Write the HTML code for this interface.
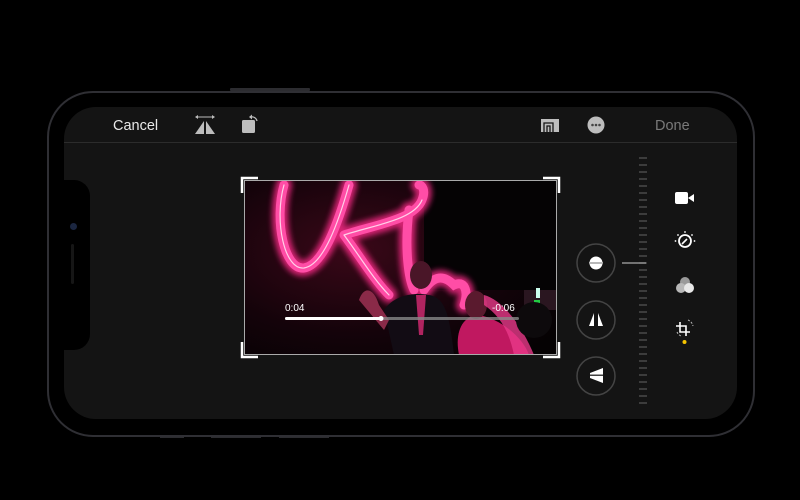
<!DOCTYPE html>
<html><head><style>
body{margin:0;width:800px;height:500px;background:#000;overflow:hidden;position:relative;font-family:"Liberation Sans",sans-serif}
.abs{position:absolute}
</style></head><body>
<div class="abs" style="left:230px;top:88px;width:80px;height:3px;background:#2c2c30;border-radius:1px"></div>
<div class="abs" style="left:160px;top:435px;width:24px;height:3px;background:#2c2c30"></div>
<div class="abs" style="left:211px;top:435px;width:50px;height:3px;background:#2c2c30"></div>
<div class="abs" style="left:279px;top:435px;width:50px;height:3px;background:#2c2c30"></div>
<div class="abs" style="left:47px;top:91px;width:704px;height:342px;border:2px solid #2f2f34;border-radius:46px;background:#000"></div>
<div class="abs" style="left:64px;top:107px;width:673px;height:312px;background:#141414;border-radius:32px"></div>
<div class="abs" style="left:62px;top:180px;width:28px;height:170px;background:#000;border-radius:0 16px 16px 0"></div>
<div class="abs" style="left:70px;top:223px;width:7px;height:7px;border-radius:50%;background:#1b2640"></div>
<div class="abs" style="left:71px;top:244px;width:3px;height:40px;border-radius:2px;background:#161616"></div>
<div class="abs" style="left:64px;top:142px;width:673px;height:1px;background:#2c2c2c"></div>
<div class="abs" style="left:113px;top:117.5px;color:#e8e8e8;font-size:14.5px">Cancel</div>
<div class="abs" style="left:655px;top:117.5px;color:#7a7a7a;font-size:14.5px">Done</div>
<svg class="abs" style="left:0;top:0" width="800" height="500">
 <g fill="#bdbdbd" stroke="#bdbdbd">
  <line x1="197" y1="117" x2="213" y2="117" stroke-width="1"/>
  <path d="M195 117l3-2v4z M215 117l-3-2v4z" stroke="none"/>
  <path d="M204 121v13h-9z M206 121v13h9z" stroke="none"/>
  <rect x="242" y="120" width="13" height="13" rx="1.5" stroke="none"/>
  <path d="M251 117a5 5 0 0 1 6 4" fill="none" stroke-width="1.2"/>
  <path d="M249 117l3-2.5v5z" stroke="none"/>
  <path d="M541 119h18v13h-18z" stroke="none"/>
  <path d="M544 132v-9h9v9 M547 132v-6h3v6" stroke="#141414" stroke-width="1.3" fill="none"/>
  <circle cx="596" cy="125" r="8.5" stroke="none"/>
 </g>
 <g fill="#444"><circle cx="592.5" cy="125" r="1.3"/><circle cx="596" cy="125" r="1.3"/><circle cx="599.5" cy="125" r="1.3"/></g>
 <g stroke="#555" stroke-width="1.2">
  <path d="M639 158h8M639 165h8M639 172h8M639 179h8M639 186h8M639 193h8M639 200h8M639 207h8M639 214h8M639 221h8M639 228h8M639 235h8M639 242h8M639 249h8M639 256h8M639 263h8M639 270h8M639 277h8M639 284h8M639 291h8M639 298h8M639 305h8M639 312h8M639 319h8M639 326h8M639 333h8M639 340h8M639 347h8M639 354h8M639 361h8M639 368h8M639 375h8M639 382h8M639 389h8M639 396h8M639 403h8"/>
 </g>
 <line x1="622" y1="263" x2="646" y2="263" stroke="#aaa" stroke-width="1.2"/>
 <g fill="none" stroke="#444" stroke-width="1.5">
  <circle cx="596" cy="263" r="19"/><circle cx="596" cy="320" r="19"/><circle cx="596" cy="376" r="19"/>
 </g>
 <g fill="#fff">
  <circle cx="596" cy="263" r="6.5"/>
  <rect x="587" y="262" width="18" height="1.8" fill="#141414"/>
  <rect x="589" y="262.3" width="14" height="1.2"/>
  <path d="M594 313l-5 13h5z M598 313l5 13h-5z"/>
  <path d="M603 368l-13 5v5l13 5z"/>
  <rect x="588" y="374.6" width="16" height="1.2" fill="#141414"/>
 </g>
 <g fill="#fff">
  <rect x="675" y="192" width="13" height="12" rx="2"/>
  <path d="M688 198l6-4v8z"/>
  <circle cx="685" cy="241" r="6" fill="none" stroke="#fff" stroke-width="1.8"/>
  <line x1="682" y1="244" x2="687" y2="239" stroke="#fff" stroke-width="1.6"/>
  <g><circle cx="685" cy="232" r="0.9"/><circle cx="678" cy="235" r="0.9"/><circle cx="692" cy="235" r="0.9"/><circle cx="675.5" cy="241" r="0.9"/><circle cx="694.5" cy="241" r="0.9"/></g>
  <circle cx="685" cy="282" r="5" fill="#9a9a9a"/>
  <circle cx="681" cy="288" r="5" fill="#b8b8b8"/>
  <circle cx="689" cy="288" r="5" fill="#e8e8e8"/>
  <path d="M680 322v10h10 M676 326h10v10" fill="none" stroke="#fff" stroke-width="1.6"/>
  <path d="M688 320a8 8 0 0 1 5 6 M677 332a8 8 0 0 0 4 4" fill="none" stroke="#bbb" stroke-width="1" stroke-dasharray="2 1.5"/>
  <circle cx="684.5" cy="342" r="2" fill="#f5c400"/>
 </g>
</svg>
<svg class="abs" style="left:244px;top:180px" width="313" height="175" viewBox="0 0 313 175">
 <defs>
  <radialGradient id="bg" cx="0.35" cy="0.4" r="0.8"><stop offset="0" stop-color="#3a0818"/><stop offset="0.6" stop-color="#14030a"/><stop offset="1" stop-color="#050203"/></radialGradient>
  <filter id="gl" x="-20%" y="-20%" width="140%" height="140%"><feGaussianBlur stdDeviation="3"/></filter>
 </defs>
 <rect width="313" height="175" fill="url(#bg)"/>
 <rect x="180" y="0" width="133" height="110" fill="#050304"/>
 <g fill="none" stroke-linecap="round">
  <g stroke="#ff2a8a" stroke-width="16" filter="url(#gl)" opacity="0.8">
   <path d="M40 5C30 40 40 90 60 88C80 85 95 40 105 5"/>
   <path d="M100 55C130 45 170 40 178 20C182 10 178 5 175 5 M100 55C115 75 130 100 145 115"/>
   <path d="M165 30C160 70 165 100 170 110 M180 110C190 95 200 95 210 105C220 100 225 110 220 125"/>
  </g>
  <g stroke="#ff4da6" stroke-width="9">
   <path d="M40 5C30 40 40 90 60 88C80 85 95 40 105 5"/>
   <path d="M100 55C130 45 170 40 178 20C182 10 178 5 175 5 M100 55C115 75 130 100 145 115"/>
   <path d="M165 30C160 70 165 100 170 110 M180 110C190 95 200 95 210 105C220 100 225 110 220 125"/>
  </g>
  <g stroke="#ffd0e8" stroke-width="1.2">
   <path d="M40 5C30 40 40 90 60 88C80 85 95 40 105 5"/>
   <path d="M100 55C130 45 170 40 178 20 M100 55C115 75 130 100 145 115"/>
  </g>
 </g>
 <path d="M150 175L140 130C150 115 170 112 185 115C200 118 205 130 210 175z" fill="#120c14"/>
 <ellipse cx="177" cy="95" rx="11" ry="14" fill="#4a1628"/>
 <path d="M172 115h10l-3 40h-4z" fill="#b02460"/>
 <path d="M115 120C120 105 130 108 135 125L145 140L140 150z" fill="#8a2a48"/>
 <path d="M215 175C210 150 220 135 235 135C260 140 280 160 285 175z" fill="#c01860"/>
 <ellipse cx="232" cy="125" rx="11" ry="14" fill="#5a1a2e"/>
 <path d="M240 115C260 120 280 150 290 175H270C265 150 255 135 240 125z" fill="#e83a8a" opacity="0.8"/>
 <rect x="280" y="110" width="33" height="20" fill="#2a1620"/>
 <rect x="292" y="108" width="4" height="10" fill="#cfe"/>
 <rect x="290" y="120" width="6" height="4" fill="#2c4"/>
 <circle cx="290" cy="140" r="18" fill="#0d0a0c"/>
 <text x="41" y="131" fill="#fff" font-size="10" font-family="Liberation Sans">0:04</text>
 <text x="248" y="131" fill="#fff" font-size="10" font-family="Liberation Sans">-0:06</text>
 <rect x="41" y="137" width="234" height="3" rx="1.5" fill="#888" opacity="0.8"/>
 <rect x="41" y="137" width="96" height="3" rx="1.5" fill="#fff"/>
 <circle cx="137" cy="138.5" r="2.5" fill="#fff"/>
 <rect x="0.5" y="0.5" width="312" height="174" fill="none" stroke="#aaa" stroke-width="1"/>
</svg>
<svg class="abs" style="left:240px;top:176px" width="321" height="183">
 <g fill="none" stroke="#fff" stroke-width="2.5">
  <path d="M2 17V2h16 M303 2h16v15 M2 166v15h16 M303 181h16v-15"/>
 </g>
</svg>
</body></html>
